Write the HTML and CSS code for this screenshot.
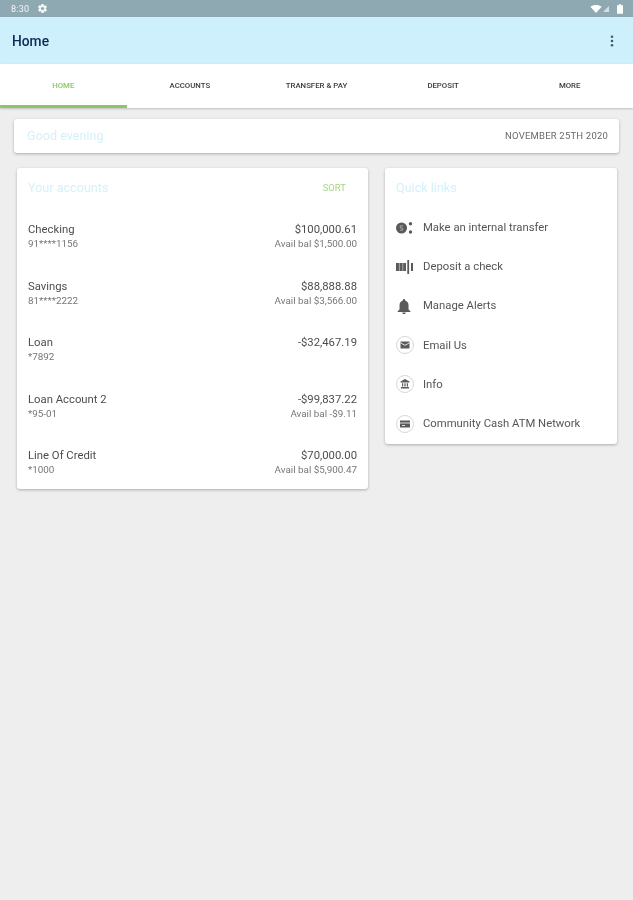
FILE: index.html
```html
<!DOCTYPE html>
<html lang="en">
<head>
<meta charset="utf-8">
<title>Home</title>
<link rel="stylesheet" href="styles.css">
</head>
<body>
<div class="status">
  <div class="status-left">
    <span class="clock">8:30</span>
    <svg class="gear" viewBox="0 0 24 24"><path d="M19.4 13c.1-.3.1-.7.1-1s0-.7-.1-1l2.100-1.600c.2-.2.2-.4.1-.6l-2-3.500c-.1-.2-.4-.3-.6-.2l-2.500 1c-.5-.4-1.100-.7-1.700-1l-.4-2.600c0-.2-.2-.4-.5-.4h-4c-.2 0-.5.2-.5.4l-.4 2.600c-.6.3-1.200.6-1.700 1l-2.500-1c-.2-.1-.5 0-.6.2l-2 3.500c-.1.200 0 .4.200.6L4.600 11c-.1.300-.1.700-.1 1s0 .7.100 1l-2.100 1.600c-.2.2-.2.4-.1.600l2 3.500c.1.200.4.300.6.200l2.500-1c.5.400 1.100.700 1.700 1l.4 2.600c0 .2.3.4.5.4h4c.3 0 .5-.2.5-.4l.4-2.600c.6-.3 1.200-.6 1.700-1l2.500 1c.2.100.5 0 .6-.2l2-3.500c.1-.2.1-.4-.1-.6zM12 15.500a3.500 3.500 0 1 1 0-7 3.500 3.500 0 0 1 0 7z"/></svg>
  </div>
  <div class="status-right">
    <svg class="wifi" viewBox="0 0 14 10"><path d="M0 2.200C2 .8 4.400 0 7 0s5 .8 7 2.200L7 10z"/></svg>
    <svg class="signal" viewBox="0 0 8 8"><path d="M8 0v8H0z"/></svg>
    <svg class="battery" viewBox="0 0 7 11"><path d="M2.200 0h2.600v1H7v10H0V1h2.200z"/></svg>
  </div>
</div>
<header class="appbar">
  <h1 class="appbar-title">Home</h1>
  <svg class="overflow" viewBox="0 0 4 14"><circle cx="2" cy="2" r="1.500"/><circle cx="2" cy="7" r="1.500"/><circle cx="2" cy="12" r="1.500"/></svg>
</header>
<nav class="tabs">
  <div class="tab tab-active">HOME</div>
  <div class="tab">ACCOUNTS</div>
  <div class="tab">TRANSFER &amp; PAY</div>
  <div class="tab">DEPOSIT</div>
  <div class="tab">MORE</div>
</nav>
<main class="content">
  <section class="greeting card">
    <span class="accent-title">Good evening</span>
    <span class="date">NOVEMBER 25TH 2020</span>
  </section>
  <div class="columns">
    <section class="card accounts">
      <div class="card-head">
        <span class="accent-title">Your accounts</span>
        <span class="sort">SORT</span>
      </div>
      <div class="account">
        <div class="line"><span>Checking</span><span>$100,000.61</span></div>
        <div class="subline"><span>91****1156</span><span>Avail bal $1,500.00</span></div>
      </div>
      <div class="account">
        <div class="line"><span>Savings</span><span>$88,888.88</span></div>
        <div class="subline"><span>81****2222</span><span>Avail bal $3,566.00</span></div>
      </div>
      <div class="account">
        <div class="line"><span>Loan</span><span>-$32,467.19</span></div>
        <div class="subline"><span>*7892</span></div>
      </div>
      <div class="account">
        <div class="line"><span>Loan Account 2</span><span>-$99,837.22</span></div>
        <div class="subline"><span>*95-01</span><span>Avail bal -$9.11</span></div>
      </div>
      <div class="account">
        <div class="line"><span>Line Of Credit</span><span>$70,000.00</span></div>
        <div class="subline"><span>*1000</span><span>Avail bal $5,900.47</span></div>
      </div>
    </section>
    <section class="card links">
      <div class="card-head"><span class="accent-title">Quick links</span></div>
      <div class="link">
        <svg class="icon" viewBox="0 0 18 18"><circle cx="5.500" cy="9" r="5.500"/><circle cx="14.500" cy="4.800" r="1.700"/><circle cx="14.500" cy="13" r="1.700"/><path class="cut-soft" d="M7 6.800H4.300V9h2.400v2.200H4"/></svg>
        <span>Make an internal transfer</span>
      </div>
      <div class="link">
        <svg class="icon" viewBox="0 0 18 18"><path d="M0 5h10v8H0z"/><path d="M11.300 2h1.800v14h-1.800z"/><path d="M15 5h2v8h-2z"/><path class="cut-soft" d="M3.400 5v8M6.800 5v8"/></svg>
        <span>Deposit a check</span>
      </div>
      <div class="link">
        <svg class="icon" viewBox="1.300 0 24 24"><path d="M12 23c1.300 0 2.300-1 2.300-2.300H9.700C9.700 22 10.700 23 12 23zm6-6.500V11c0-3.100-1.600-5.600-4.500-6.300V4c0-.8-.7-1.500-1.500-1.500s-1.500.7-1.500 1.500v.7C7.600 5.400 6 7.900 6 11v5.500L3.500 19v1h17v-1z"/></svg>
        <span>Manage Alerts</span>
      </div>
      <div class="link">
        <svg class="icon" viewBox="0 0 18 18"><circle class="ring" cx="9" cy="9" r="8.500"/><path d="M4.500 5.500h9v7h-9z"/><path class="cut-thin" d="M4.500 6.800L9 9.300l4.500-2.500"/></svg>
        <span>Email Us</span>
      </div>
      <div class="link">
        <svg class="icon" viewBox="0 0 18 18"><circle class="ring" cx="9" cy="9" r="8.500"/><path d="M9 4l4.500 2.500v1h-9v-1zM5 12h8v1.500H5zM6 8.300h1.200V11.500H6zM8.400 8.300h1.200V11.500H8.400zM10.800 8.300H12V11.500h-1.200z"/></svg>
        <span>Info</span>
      </div>
      <div class="link">
        <svg class="icon" viewBox="0 0 18 18"><circle class="ring" cx="9" cy="9" r="8.500"/><path d="M4 5.500h10v7H4z"/><path class="cut-thin" d="M4 8h10M6 10.500h3"/></svg>
        <span>Community Cash ATM Network</span>
      </div>
    </section>
  </div>
</main>
</body>
</html>
```
FILE: styles.css
```css
* { box-sizing: border-box; }
html, body { margin: 0; padding: 0; }
html { background: #eeeeee; }
body {
  width: 633px;
  height: 900px;
  overflow: hidden;
  background: #eeeeee;
  font-family: Roboto, "Liberation Sans", sans-serif;
  color: #4a4a4a;
  filter: blur(0.6px);
}
.status {
  height: 17px;
  background: #8fa9b2;
  display: flex;
  align-items: center;
  justify-content: space-between;
  padding: 0 10px 0 11px;
}
.status-left, .status-right { display: flex; align-items: center; }
.clock { font-size: 9px; color: #f2f6f7; letter-spacing: 0.2px; }
.gear { width: 11px; height: 11px; margin-left: 8px; fill: #f5f8f9; }
.wifi { width: 12px; height: 8px; fill: #fff; }
.signal { width: 6px; height: 6px; margin-left: 1px; fill: #d5dfe2; }
.battery { width: 6px; height: 10px; margin-left: 8px; fill: #fff; }
.appbar {
  height: 47px;
  background: #cdf0fc;
  display: flex;
  align-items: center;
  justify-content: space-between;
  padding: 0 19px 0 12px;
}
.appbar-title { margin: 0; font-size: 13.800px; font-weight: 500; color: #0d2a55; }
.overflow { width: 4px; height: 12px; fill: #3f5a70; }
.tabs {
  height: 44px;
  background: #fff;
  display: grid;
  grid-template-columns: repeat(5, 1fr);
  box-shadow: 0 1px 2px rgba(0,0,0,.2);
}
.tab {
  display: flex;
  align-items: center;
  justify-content: center;
  font-size: 7.800px;
  font-weight: 500;
  color: #3c3c3c;
  padding-top: 1px;
  border-bottom: 3px solid transparent;
}
.tab-active { color: #8cc665; border-bottom-color: #8cc665; }
.content { padding: 11px 14px 0; }
.card {
  background: #fff;
  border-radius: 3px;
  box-shadow: 0 1px 3px rgba(0,0,0,.28);
}
.greeting {
  height: 34px;
  display: flex;
  align-items: center;
  justify-content: space-between;
  padding: 0 11px 1px 13px;
}
.accent-title { font-size: 12.600px; color: #d3f1fb; }
.date { font-size: 9.500px; color: #6a6a6a; letter-spacing: 0.2px; }
.columns {
  display: flex;
  align-items: flex-start;
  gap: 17px;
  margin: 15px 2px 0 3px;
}
.accounts { width: 351px; padding: 0 11px 8px; }
.links { width: 232px; padding: 0 11px 1px; }
.card-head {
  height: 40px;
  padding-bottom: 2px;
  display: flex;
  align-items: center;
  justify-content: space-between;
}
.sort { font-size: 9.500px; color: #a9d48a; margin-right: 11px; }
.account { height: 56.500px; padding-top: 15px; }
.account:last-child { height: 47px; }
.line, .subline { display: flex; justify-content: space-between; }
.line { font-size: 11.300px; line-height: 14px; color: #4d4d4d; }
.subline { font-size: 9.850px; line-height: 14px; color: #777; }
.link {
  height: 39.200px;
  display: flex;
  align-items: center;
  gap: 9px;
  font-size: 11.300px;
  color: #555;
}
.icon { width: 18px; height: 18px; flex: none; fill: #5a5a5a; }
.cut-soft { fill: none; stroke: #a8a8a8; stroke-width: 1; }
.cut-thin { fill: none; stroke: #fff; stroke-width: .8; }
.ring { fill: #fff; stroke: #c4c4c4; stroke-width: .7; }
```
